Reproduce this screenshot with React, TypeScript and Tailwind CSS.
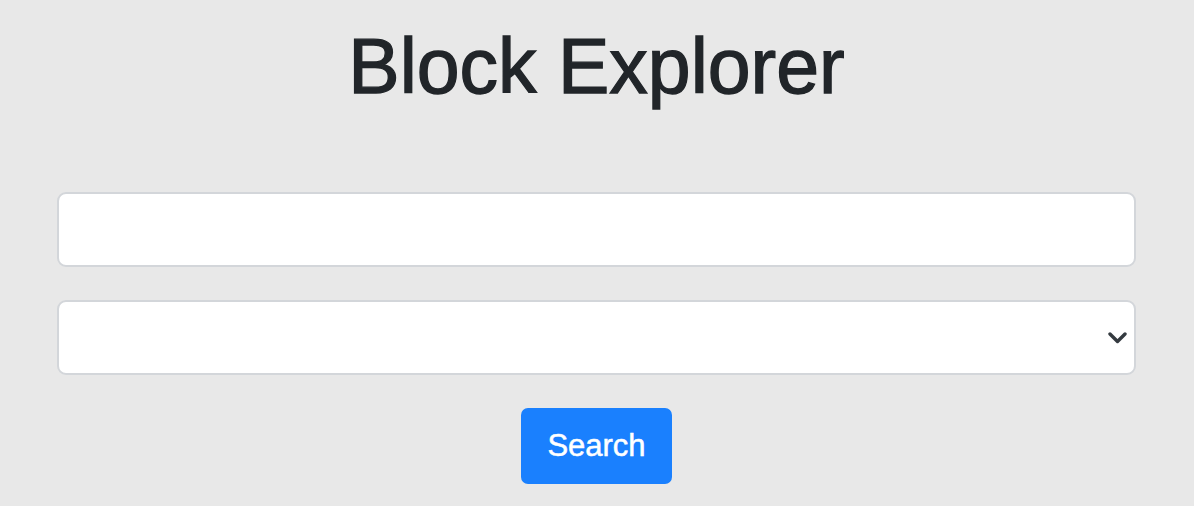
import React from "react";

function Chevron() {
  return (
    <svg
      className="pointer-events-none absolute right-[9px] top-1/2 -translate-y-1/2"
      width="19"
      height="13"
      viewBox="0 0 19 13"
      fill="none"
    >
      <path
        d="M2 2.5 L9.5 10 L17 2.5"
        stroke="#343a40"
        strokeWidth="3.4"
        strokeLinecap="round"
        strokeLinejoin="round"
      />
    </svg>
  );
}

export default function App() {
  return (
    <div
      className="min-h-screen bg-[#e8e8e8] pl-[57px] pr-[58px] pt-[20px] text-[#212529]"
      style={{ fontFamily: '"Liberation Sans", Arial, sans-serif' }}
    >
      {/* Title */}
      <h1 className="text-center text-[77px] font-normal leading-[1.2] [-webkit-text-stroke:1.3px_#212529]">
        Block Explorer
      </h1>

      {/* Search form */}
      <form
        className="mt-[80px] flex flex-col items-center gap-[33px]"
        onSubmit={(e) => e.preventDefault()}
      >
        <input
          type="text"
          className="block h-[75px] w-full rounded-[9px] border-2 border-[#d3d6da] bg-white px-6 text-[30px] outline-none"
        />
        <div className="relative w-full">
          <select className="block h-[75px] w-full appearance-none rounded-[9px] border-2 border-[#d3d6da] bg-white px-6 text-[30px] outline-none">
            <option value=""></option>
          </select>
          <Chevron />
        </div>
        <button
          type="submit"
          className="h-[76px] w-[151px] rounded-[7px] bg-[#1a80fe] text-[31px] text-white [-webkit-text-stroke:0.5px_#ffffff]"
        >
          Search
        </button>
      </form>
    </div>
  );
}
